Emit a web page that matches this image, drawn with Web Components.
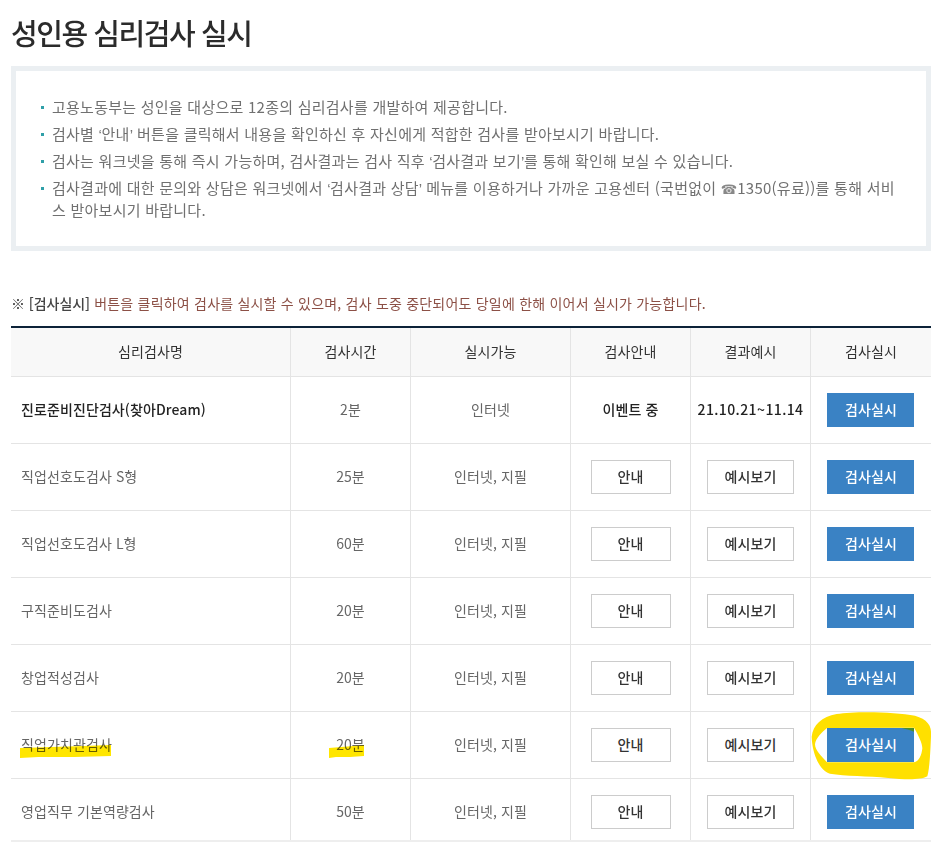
<!DOCTYPE html>
<html lang="ko">
<head>
<meta charset="utf-8">
<title>성인용 심리검사 실시</title>
<style>
html, body { margin: 0; padding: 0; background: #fff; overflow: hidden; }
body { height: 842px; font-family: "Noto Sans CJK KR", "Noto Sans", sans-serif; }
</style>
</head>
<body>
<psy-page>
  <psy-title>성인용 심리검사 실시</psy-title>
  <psy-notice>
    <psy-item>고용노동부는 성인을 대상으로 12종의 심리검사를 개발하여 제공합니다.</psy-item>
    <psy-item>검사별 <i>‘</i>안내<i>’</i> 버튼을 클릭해서 내용을 확인하신 후 자신에게 적합한 검사를 받아보시기 바랍니다.</psy-item>
    <psy-item>검사는 워크넷을 통해 즉시 가능하며, 검사결과는 검사 직후 <i>‘</i>검사결과 보기<i>’</i>를 통해 확인해 보실 수 있습니다.</psy-item>
    <psy-item>검사결과에 대한 문의와 상담은 워크넷에서 <i>‘</i>검사결과 상담<i>’</i> 메뉴를 이용하거나 가까운 고용센터 (국번없이 <u>☎</u>1350(유료))를 통해 서비<br>스 받아보시기 바랍니다.</psy-item>
  </psy-notice>
  <psy-warn><b>※ [검사실시]</b> 버튼을 클릭하여 검사를 실시할 수 있으며, 검사 도중 중단되어도 당일에 한해 이어서 실시가 가능합니다.</psy-warn>
  <psy-table>
    <psy-row head>
      <psy-cell>심리검사명</psy-cell><psy-cell>검사시간</psy-cell><psy-cell>실시가능</psy-cell>
      <psy-cell>검사안내</psy-cell><psy-cell>결과예시</psy-cell><psy-cell>검사실시</psy-cell>
    </psy-row>
    <psy-row>
      <psy-cell left strong>진로준비진단검사(찾아Dream)</psy-cell><psy-cell>2분</psy-cell><psy-cell>인터넷</psy-cell>
      <psy-cell strong>이벤트 중</psy-cell><psy-cell strong wide>21.10.21~11.14</psy-cell>
      <psy-cell><psy-btn primary>검사실시</psy-btn></psy-cell>
    </psy-row>
    <psy-test name="직업선호도검사 S형" time="25분"></psy-test>
    <psy-test name="직업선호도검사 L형" time="60분"></psy-test>
    <psy-test name="구직준비도검사" time="20분"></psy-test>
    <psy-test name="창업적성검사" time="20분"></psy-test>
    <psy-test name="직업가치관검사" time="20분" marked></psy-test>
    <psy-test name="영업직무 기본역량검사" time="50분"></psy-test>
  </psy-table>
</psy-page>

<script>
const define = (name, css, html) => {
  customElements.define(name, class extends HTMLElement {
    constructor() {
      super();
      this.attachShadow({ mode: "open" }).innerHTML = `<style>${css}</style>${html}`;
    }
  });
};

define("psy-page", `
  :host { display: block; padding: 14px 8px 0 11px; box-sizing: border-box; height: 842px; }
`, `<slot></slot>`);

define("psy-title", `
  :host { display: block; height: 52px; line-height: 36px; font-size: 29px; font-weight: 500; color: #2b2b2b; letter-spacing: -1.45px; }
`, `<slot></slot>`);

define("psy-notice", `
  :host { display: block; box-sizing: border-box; height: 185px; border: 5px solid #ebeff2; padding: 25px 28px 0 25px; }
`, `<slot></slot>`);

define("psy-item", `
  :host { display: block; position: relative; padding-left: 11px; margin-bottom: 5px; font-size: 15px; line-height: 22px; color: #707070; letter-spacing: 0.25px; }
  :host::before { content: ""; position: absolute; left: 0; top: 10px; width: 3px; height: 3px; background: #2f9fa8; }
  ::slotted(i) { font-family: "Liberation Sans", sans-serif; font-style: normal; line-height: 1; letter-spacing: -0.4px; }
  ::slotted(u) { font-family: "DejaVu Sans", sans-serif; font-size: 13px; line-height: 1; color: #888; text-decoration: none; }
`, `<slot></slot>`);

define("psy-warn", `
  :host { display: block; margin-top: 41px; height: 34px; line-height: 22px; font-size: 14px; color: #8c5046; letter-spacing: 0.21px; }
  ::slotted(b) { font-weight: 500; color: #444; letter-spacing: -0.05px; }
`, `<slot></slot>`);

define("psy-table", `
  :host { display: block; width: 920px; height: 514px; overflow: hidden; border-top: 2px solid #0c2238; box-sizing: border-box; box-shadow: 0 2px 0 #eeeeee; }
`, `<slot></slot>`);

define("psy-row", `
  :host { display: grid; grid-template-columns: 280px 120px 160px 120px 120px 120px; height: 67px; box-sizing: border-box; border-bottom: 1px solid #e4e4e4; }
  :host([head]) { height: 49px; background: #f8f8f8; }
`, `<slot></slot>`);

define("psy-cell", `
  :host { display: flex; align-items: center; justify-content: center; position: relative; box-sizing: border-box; padding-bottom: 2px; font-size: 14px; color: #666; letter-spacing: 0.1px; border-right: 1px solid #e4e4e4; min-width: 0; white-space: nowrap; }
  :host(:last-child) { border-right: 0; }
  :host([left]) { justify-content: flex-start; padding-left: 10px; }
  :host([strong]) { color: #222; font-weight: 500; }
  :host([wide]) { letter-spacing: 0.4px; }
  :host-context(psy-row[head]) { color: #333; }
`, `<slot></slot>`);

define("psy-btn", `
  :host { display: flex; align-items: center; justify-content: center; box-sizing: border-box; width: 87px; height: 34px; margin-top: 2px; padding-bottom: 2px; font-size: 14px; font-weight: 500; color: #333; background: #fff; border: 1px solid #ccc; }
  :host([narrow]) { width: 80px; }
  :host([primary]) { background: #3a82c4; border-color: #3a82c4; color: #fff; margin-right: 2px; padding-left: 2px; }
`, `<slot></slot>`);

// 노란 형광펜 표시
define("psy-swipe", `
  :host { position: absolute; display: block; pointer-events: none; mix-blend-mode: multiply; }
  svg { display: block; }
`, `<svg width="100%" height="100%" preserveAspectRatio="none" viewBox="0 0 100 13"><path d="M0 3 L35 2 L70 1 L100 0 L100 11 L60 12 L20 12 L0 13 Z" fill="#ffe600"/></svg>`);

define("psy-circle", `
  :host { position: absolute; display: block; left: -6px; top: -7px; width: 130px; height: 80px; pointer-events: none; }
  svg { display: block; }
`, `<svg width="130" height="80" viewBox="0 0 390 240">
  <path fill-rule="evenodd" fill="#ffe000" d="M20 95 C24 60 50 35 95 27 C150 18 270 20 330 32 C365 42 382 60 378 95 C376 140 374 190 367 214 C345 226 300 224 250 219 C190 212 120 214 75 206 C45 196 22 150 20 95 Z
    M66 69 L327 68 C340 90 352 115 352 130 C350 150 342 170 327 172 L66 172 C50 155 30 135 30 118 C32 100 50 82 66 69 Z"/>
  <path fill="#4a8f2a" d="M290 69 L327 69 L327 80 C315 74 300 72 290 69 Z"/>
</svg>`);

customElements.define("psy-test", class extends HTMLElement {
  constructor() {
    super();
    const root = this.attachShadow({ mode: "open" });
    const name = this.getAttribute("name");
    const time = this.getAttribute("time");
    const marked = this.hasAttribute("marked");
    root.innerHTML = `
      <style>:host { display: block; }</style>
      <psy-row>
        <psy-cell left>${name}${marked ? `<psy-swipe style="left:9px;top:33px;width:91px;height:13px"></psy-swipe>` : ""}</psy-cell>
        <psy-cell>${time}${marked ? `<psy-swipe style="left:38px;top:33px;width:35px;height:13px"></psy-swipe>` : ""}</psy-cell>
        <psy-cell>인터넷, 지필</psy-cell>
        <psy-cell><psy-btn narrow>안내</psy-btn></psy-cell>
        <psy-cell><psy-btn>예시보기</psy-btn></psy-cell>
        <psy-cell><psy-btn primary>검사실시</psy-btn>${marked ? `<psy-circle></psy-circle>` : ""}</psy-cell>
      </psy-row>`;
  }
});
</script>
</body>
</html>
